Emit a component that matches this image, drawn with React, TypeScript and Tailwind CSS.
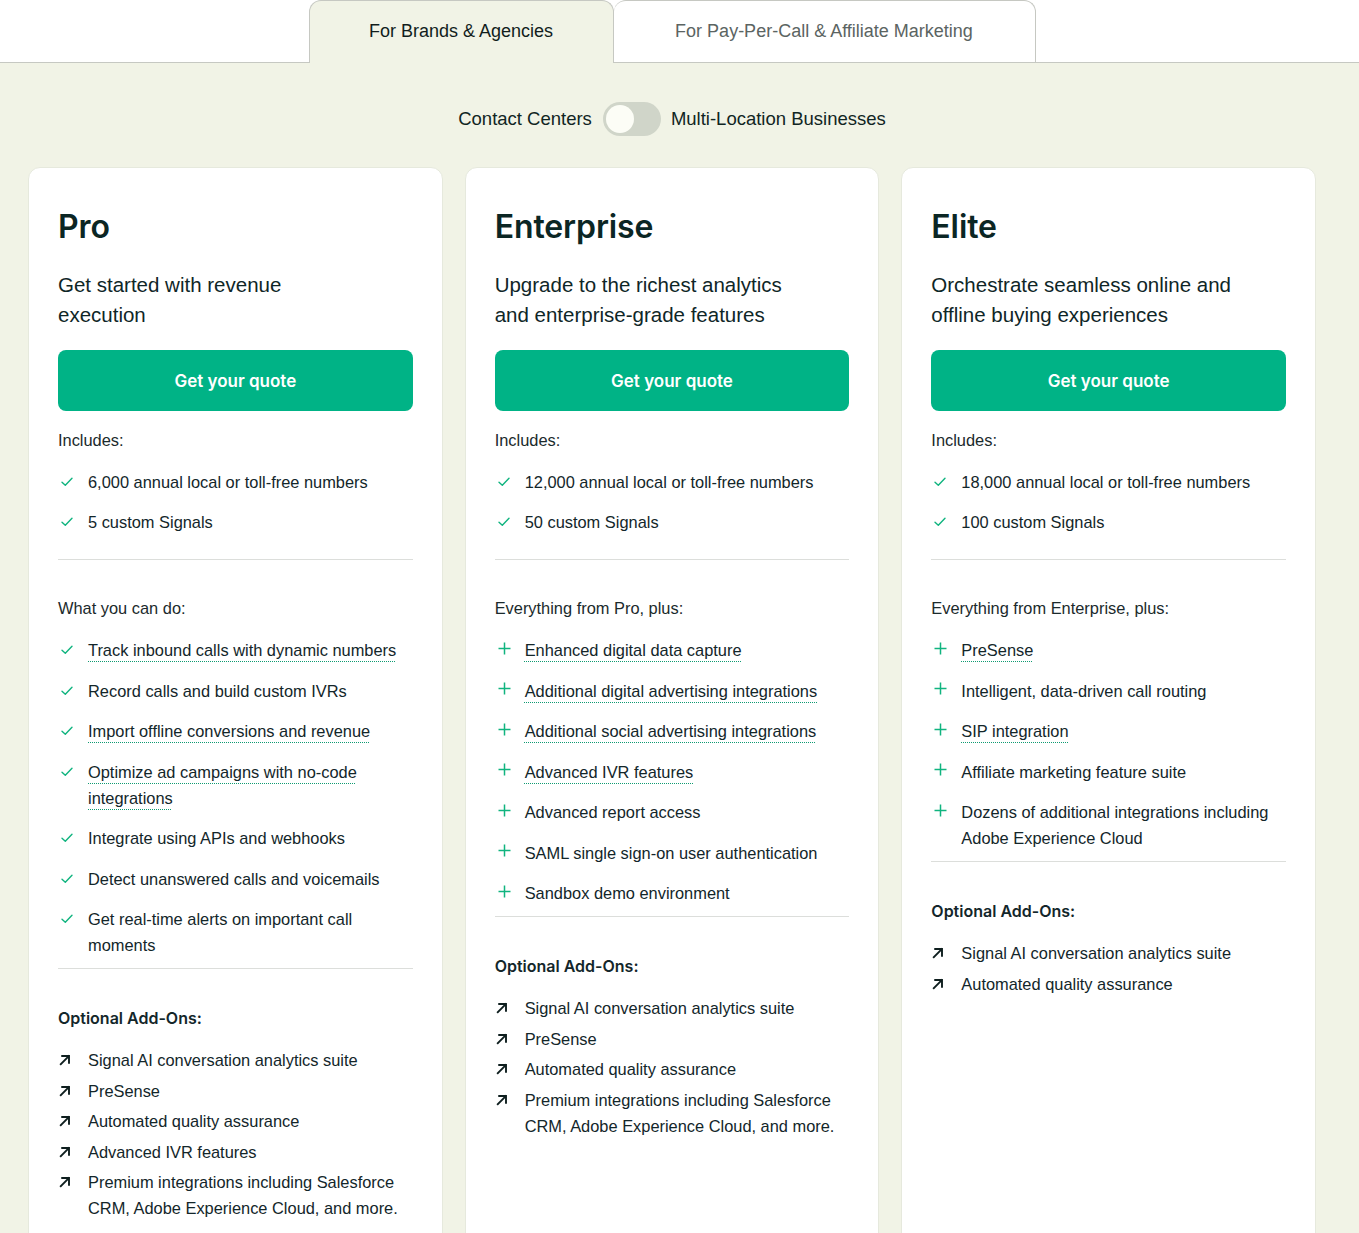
import React from "react";

type Item = { text: string; u?: boolean };

const Check = () => (
  <svg width="12" height="10" viewBox="0 0 12 10" fill="none">
    <path d="M1 5.2 L4.3 8.3 L11 1.2" stroke="#10b47f" strokeWidth="1.4" strokeLinecap="round" strokeLinejoin="round" />
  </svg>
);

const Plus = () => (
  <svg width="13" height="13" viewBox="0 0 13 13" fill="none">
    <path d="M6.5 0.5 V12.5 M0.5 6.5 H12.5" stroke="#10b47f" strokeWidth="1.5" />
  </svg>
);

const Arrow = () => (
  <svg width="12" height="12" viewBox="0 0 12 12" fill="none">
    <path d="M1.8 10.2 L9.8 2.2 M3.2 2 H10 V8.8" stroke="#0e1e1e" strokeWidth="1.9" strokeLinecap="square" />
  </svg>
);

function List({ items, icon, gap }: { items: Item[]; icon: "check" | "plus" | "arrow"; gap: string }) {
  return (
    <ul className={`mt-[17px] flex flex-col ${gap}`}>
      {items.map((it, i) => (
        <li key={i} className="flex text-[16.4px] leading-[26px] text-[#13262a]">
          <span
            className={
              icon === "arrow"
                ? "w-[30px] shrink-0 h-[26px] flex items-center pl-[1px]"
                : icon === "plus"
                ? "w-[30px] shrink-0 h-[22px] flex items-center pl-[3px]"
                : "w-[30px] shrink-0 h-[26px] flex items-center pl-[3px]"
            }
          >
            {icon === "check" ? <Check /> : icon === "plus" ? <Plus /> : <Arrow />}
          </span>
          <span>
            {it.u ? (
              <span className="underline decoration-dotted decoration-[#0f9b72] decoration-1 underline-offset-[5px]">
                {it.text}
              </span>
            ) : (
              it.text
            )}
          </span>
        </li>
      ))}
    </ul>
  );
}

type Plan = {
  name: string;
  desc: string;
  includes: Item[];
  heading: string;
  icon: "check" | "plus";
  features: Item[];
  addons: Item[];
};

const plans: Plan[] = [
  {
    name: "Pro",
    desc: "Get started with revenue execution",
    includes: [{ text: "6,000 annual local or toll-free numbers" }, { text: "5 custom Signals" }],
    heading: "What you can do:",
    icon: "check",
    features: [
      { text: "Track inbound calls with dynamic numbers", u: true },
      { text: "Record calls and build custom IVRs" },
      { text: "Import offline conversions and revenue", u: true },
      { text: "Optimize ad campaigns with no-code integrations", u: true },
      { text: "Integrate using APIs and webhooks" },
      { text: "Detect unanswered calls and voicemails" },
      { text: "Get real-time alerts on important call moments" },
    ],
    addons: [
      { text: "Signal AI conversation analytics suite" },
      { text: "PreSense" },
      { text: "Automated quality assurance" },
      { text: "Advanced IVR features" },
      { text: "Premium integrations including Salesforce CRM, Adobe Experience Cloud, and more." },
    ],
  },
  {
    name: "Enterprise",
    desc: "Upgrade to the richest analytics and enterprise-grade features",
    includes: [{ text: "12,000 annual local or toll-free numbers" }, { text: "50 custom Signals" }],
    heading: "Everything from Pro, plus:",
    icon: "plus",
    features: [
      { text: "Enhanced digital data capture", u: true },
      { text: "Additional digital advertising integrations", u: true },
      { text: "Additional social advertising integrations", u: true },
      { text: "Advanced IVR features", u: true },
      { text: "Advanced report access" },
      { text: "SAML single sign-on user authentication" },
      { text: "Sandbox demo environment" },
    ],
    addons: [
      { text: "Signal AI conversation analytics suite" },
      { text: "PreSense" },
      { text: "Automated quality assurance" },
      { text: "Premium integrations including Salesforce CRM, Adobe Experience Cloud, and more." },
    ],
  },
  {
    name: "Elite",
    desc: "Orchestrate seamless online and offline buying experiences",
    includes: [{ text: "18,000 annual local or toll-free numbers" }, { text: "100 custom Signals" }],
    heading: "Everything from Enterprise, plus:",
    icon: "plus",
    features: [
      { text: "PreSense", u: true },
      { text: "Intelligent, data-driven call routing" },
      { text: "SIP integration", u: true },
      { text: "Affiliate marketing feature suite" },
      { text: "Dozens of additional integrations including Adobe Experience Cloud" },
    ],
    addons: [{ text: "Signal AI conversation analytics suite" }, { text: "Automated quality assurance" }],
  },
];

function Card({ p }: { p: Plan }) {
  return (
    <div className="bg-white rounded-[12px] border border-[#e6e9dd] px-[29px] pt-[39px] pb-[40px]">
      <h2 className="font-['Inter',sans-serif] font-semibold text-[32px] leading-[40px] text-[#0b2624] tracking-[-0.1px]">
        {p.name}
      </h2>
      <p className="mt-[23px] text-[20.5px] leading-[30px] max-w-[308px] text-[#0f2627]">{p.desc}</p>
      <button className="mt-[20px] w-full h-[61px] pt-[2px] rounded-[8px] bg-[#00b386] text-white font-['Inter',sans-serif] font-semibold text-[17px]">
        Get your quote
      </button>
      <div className="pb-[24px] border-b border-[#dcdedb]">
        <div className="mt-[17px] text-[16.4px] leading-[24px] text-[#1b2a2c]">Includes:</div>
        <List items={p.includes} icon="check" gap="gap-[14px]" />
      </div>
      <div className="pt-[36px] pb-[10px] border-b border-[#dcdedb]">
        <div className="text-[16.4px] leading-[24px] text-[#1b2a2c]">{p.heading}</div>
        <List items={p.features} icon={p.icon} gap="gap-[14.5px]" />
      </div>
      <div className="pt-[37px]">
        <div className="font-['Inter',sans-serif] font-semibold text-[16px] leading-[24px] text-[#13262a]">
          Optional Add-Ons:
        </div>
        <List items={p.addons} icon="arrow" gap="gap-[4.5px]" />
      </div>
    </div>
  );
}

export default function App() {
  return (
    <div className="min-h-screen bg-[#f1f3e6] font-['Liberation_Sans',Arial,sans-serif] text-[#0e2826]">
      <div className="bg-white border-b border-[#c6c8c2]">
        <div className="w-[1344px] h-[62px] flex justify-center items-end">
          <div className="relative -mb-px w-[305px] h-[63px] bg-[#f1f3e6] border border-b-0 border-[#c6c8c2] rounded-t-[12px] flex items-center justify-center text-[18px] text-[#111d1c]">
            <span className="-mt-[1px]">For Brands &amp; Agencies</span>
          </div>
          <div className="w-[422px] h-[62px] bg-white border border-b-0 border-l-0 border-[#c6c8c2] rounded-t-[12px] flex items-center justify-center text-[18px] text-[#5b6462]">
            <span className="-mt-[1px]">For Pay-Per-Call &amp; Affiliate Marketing</span>
          </div>
        </div>
      </div>
      <div className="w-[1344px]">
        <div className="pt-[39px] flex justify-center items-center text-[18.5px] text-[#102523]">
          <span>Contact Centers</span>
          <div className="ml-[11px] mr-[10px] w-[58px] h-[34px] rounded-full bg-[#d0d5c9] flex items-center px-[3px]">
            <div className="w-[28px] h-[28px] rounded-full bg-[#fcfdf6]" />
          </div>
          <span>Multi-Location Businesses</span>
        </div>
        <div className="mt-[31px] px-[28px] grid grid-cols-3 gap-[22px] pb-[40px]">
          {plans.map((p) => (
            <Card key={p.name} p={p} />
          ))}
        </div>
      </div>
    </div>
  );
}
